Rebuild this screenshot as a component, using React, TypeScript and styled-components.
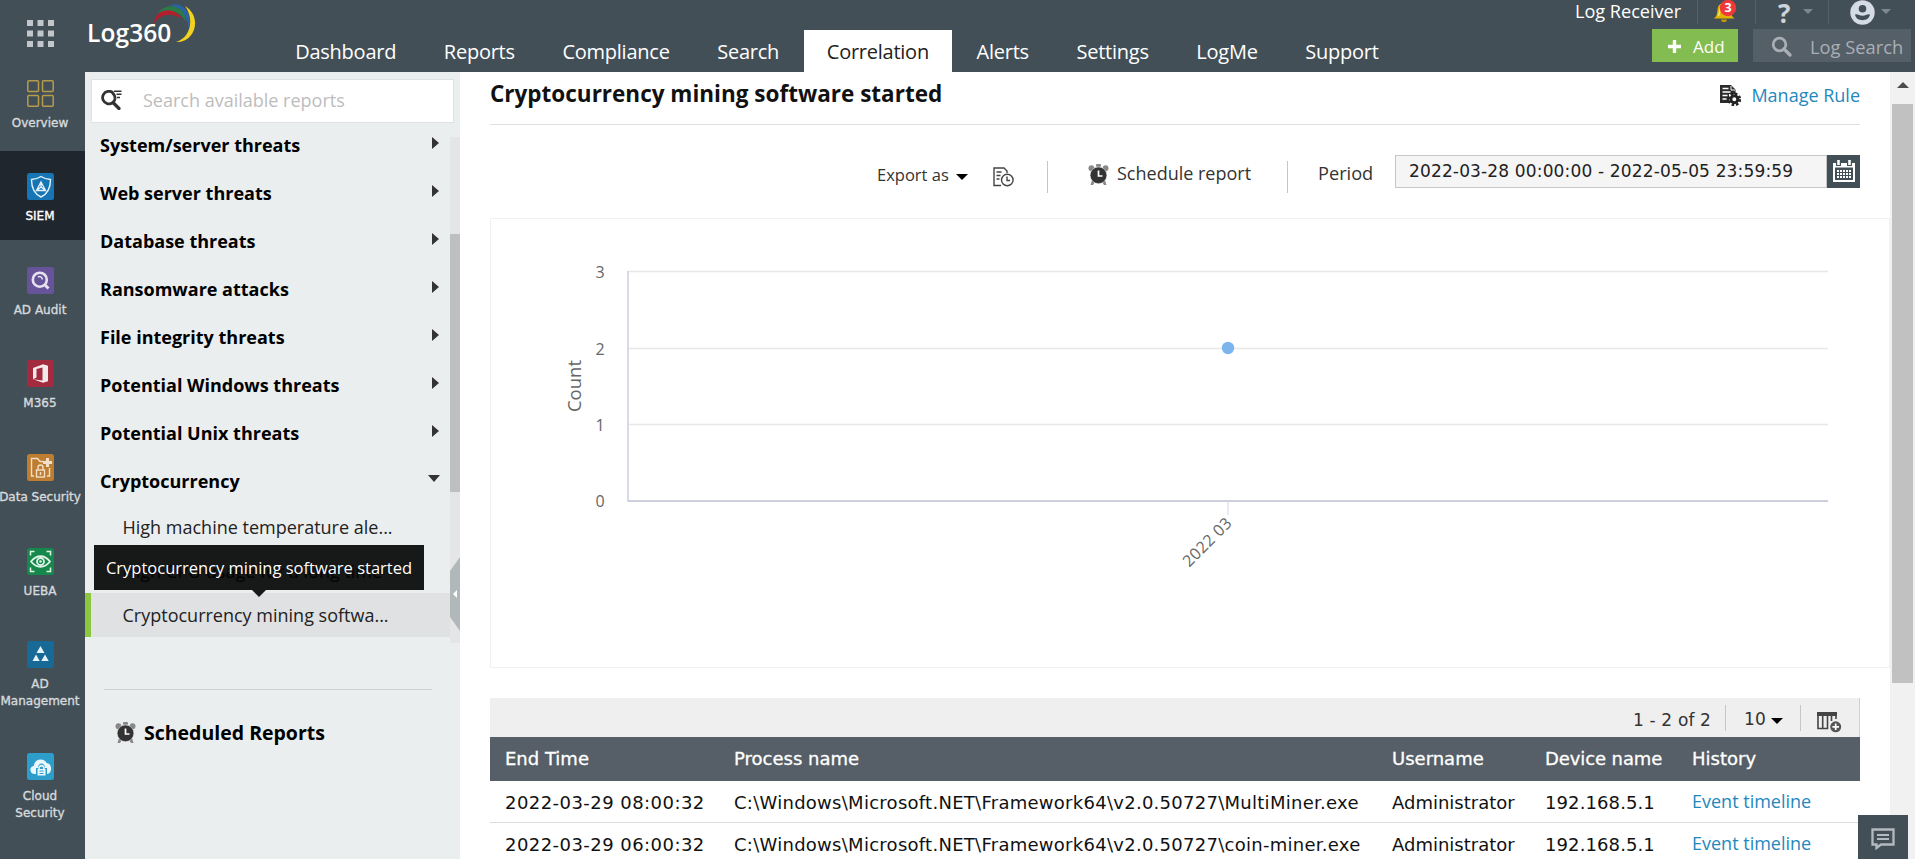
import React from "react";
import styled, { createGlobalStyle } from "styled-components";

const GlobalStyle = createGlobalStyle`
  * {
    box-sizing: border-box;
  }
  body {
    margin: 0;
    font-family: "Open Sans", sans-serif;
    color: #1d1d1d;
    background: #fff;
    overflow: hidden;
  }
`;

const Page = styled.div`
  display: flex;
  flex-direction: column;
  width: 1915px;
  height: 859px;
  overflow: hidden;
`;

/* ---------- header ---------- */

const Header = styled.header`
  display: flex;
  height: 72px;
  flex: none;
  background: #434f57;
  color: #fff;
`;

const AppsButton = styled.div`
  width: 85px;
  padding: 20px 0 0 27px;
`;

const Brand = styled.div`
  position: relative;
  width: 187px;
  padding: 16px 0 0 2px;
  font-size: 24.5px;
  font-weight: 600;
  line-height: 34px;
  letter-spacing: 0.1px;
`;

const BrandArc = styled.svg`
  position: absolute;
  left: 64px;
  top: 2px;
`;

const Nav = styled.nav`
  display: flex;
  align-items: flex-end;
  gap: 1.3px;
  flex: 1;
`;

const NavItem = styled.a<{ $active?: boolean }>`
  height: 42px;
  padding: 0 23.2px;
  font-size: 20px;
  line-height: 43px;
  letter-spacing: -0.25px;
  color: ${({ $active }) => ($active ? "#222" : "#fff")};
  background: ${({ $active }) => ($active ? "#fff" : "transparent")};
`;

const HeaderTools = styled.div`
  width: 340px;
  display: flex;
  flex-direction: column;
`;

const UserRow = styled.div`
  display: flex;
  height: 24px;
  font-size: 18.1px;
  line-height: 22px;
`;

const Receiver = styled.span`
  width: 122px;
`;

const ToolCell = styled.div<{ $width: number; $pad: number }>`
  display: flex;
  width: ${({ $width }) => $width}px;
  padding-left: ${({ $pad }) => $pad}px;
  border-left: 1px solid #56626a;
`;

const Help = styled.span`
  width: 22px;
  height: 24px;
  font-size: 26px;
  font-weight: 700;
  line-height: 26px;
  color: #cdd3d9;
`;

const SmallCaret = styled.i<{ $left?: number }>`
  width: 0;
  height: 0;
  margin: 9px 0 0 ${({ $left = 3 }) => $left}px;
  border: 5px solid transparent;
  border-top-color: #7d8890;
  border-bottom: 0;
`;

const ActionRow = styled.div`
  display: flex;
  padding: 5px 0 0 77px;
`;

const AddButton = styled.button`
  display: flex;
  align-items: center;
  gap: 12px;
  width: 86px;
  height: 33px;
  margin-right: 15px;
  padding: 2px 0 0 16px;
  border: 0;
  background: #83bc50;
  color: #fff;
  font: 17px "Open Sans", sans-serif;
`;

const LogSearch = styled.div`
  display: flex;
  align-items: center;
  gap: 18px;
  width: 158px;
  height: 33px;
  padding: 2px 0 0 18px;
  background: #555f68;
  color: #a9afb5;
  font-size: 18.3px;
  white-space: nowrap;
`;

/* ---------- product rail ---------- */

const Body = styled.div`
  display: flex;
  flex: 1;
  min-height: 0;
`;

const Rail = styled.aside`
  width: 85px;
  background: #434f57;
`;

const RailItem = styled.div<{ $active?: boolean; $height: number; $top: number }>`
  display: flex;
  flex-direction: column;
  align-items: center;
  height: ${({ $height }) => $height}px;
  padding: ${({ $top }) => $top}px 5px 0 0;
  background: ${({ $active }) => ($active ? "#20262d" : "transparent")};
  color: ${({ $active }) => ($active ? "#fff" : "#d6dadd")};
  font: 12px/17px "DejaVu Sans", sans-serif;
  -webkit-text-stroke: 0.35px;
  text-align: center;
  white-space: pre;

  svg {
    flex: none;
    margin: 0 0 8px 1px;
  }
`;

/* ---------- report tree ---------- */

const Sidebar = styled.aside`
  display: flex;
  flex-direction: column;
  width: 375px;
  background: #ebeeef;
`;

const ReportSearch = styled.div`
  display: flex;
  align-items: center;
  gap: 21px;
  width: 363px;
  height: 44px;
  margin: 7px 0 0 6px;
  padding: 0 0 3px 9px;
  border: 1px solid #dfe2e4;
  background: #fff;
  color: #bdbdbd;
  font-size: 18px;
`;

const TreeArea = styled.div`
  display: flex;
  position: relative;
  height: 506px;
  margin-top: 14px;
`;

const Tree = styled.div`
  width: 365px;
  margin-top: -16px;
`;

const Group = styled.div`
  display: flex;
  justify-content: space-between;
  height: 48px;
  padding: 0 10px 0 15px;
  font-size: 18px;
  font-weight: 700;
  line-height: 48px;
  color: #000;
`;

const GroupArrow = styled.i<{ $open?: boolean }>`
  width: 0;
  height: 0;
  margin: ${({ $open }) => ($open ? "18px 0 0" : "16px 1px 0 0")};
  border-style: solid;
  border-color: ${({ $open }) =>
    $open
      ? "#333 transparent transparent"
      : "transparent transparent transparent #333"};
  border-width: ${({ $open }) => ($open ? "7px 6px 0" : "6px 0 6px 7px")};
`;

const Leaf = styled.div<{ $selected?: boolean }>`
  height: 44px;
  padding-left: ${({ $selected }) => ($selected ? 31.5 : 37.5)}px;
  border-left: ${({ $selected }) => ($selected ? "6px solid #8dc63f" : "0")};
  background: ${({ $selected }) => ($selected ? "#dfe1e2" : "transparent")};
  font-size: 18px;
  line-height: 44px;
  color: #222;
`;

const TreeScroll = styled.div`
  width: 10px;
  padding-top: 97px;
  background: #e3e5e6;
`;

const TreeThumb = styled.div`
  height: 258px;
  background: #bdbfc0;
`;

const CollapseHandle = styled.div`
  position: absolute;
  right: 0;
  top: 420px;
  display: flex;
  align-items: center;
  justify-content: center;
  width: 10px;
  height: 74px;
  background: #b0b8ba;
  clip-path: polygon(0 14px, 100% 0, 100% 100%, 0 60px);
`;

const HandleArrow = styled.i`
  border: 4px solid transparent;
  border-right-color: #fff;
  border-left: 0;
`;

const Tooltip = styled.div`
  position: absolute;
  left: 9px;
  top: 408px;
  width: 330px;
  height: 45px;
  background: rgba(0, 0, 0, 0.9);
  color: #fff;
  font-size: 16.5px;
  line-height: 45px;
  text-align: center;
  white-space: nowrap;

  &::after {
    content: "";
    position: absolute;
    left: 158px;
    top: 45px;
    border: 7px solid transparent;
    border-top-color: #181818;
    border-bottom: 0;
  }
`;

const Scheduled = styled.div`
  display: flex;
  align-items: center;
  gap: 8px;
  width: 328px;
  margin: 46px 0 0 19px;
  padding: 29px 0 0 11px;
  border-top: 1px solid #cfd1d3;
  color: #000;
  font-size: 19.5px;
  font-weight: 700;
`;

/* ---------- report ---------- */

const Main = styled.main`
  display: flex;
  flex-direction: column;
  width: 1430px;
  padding-left: 30px;
`;

const TitleRow = styled.div`
  display: flex;
  justify-content: space-between;
  width: 1370px;
  height: 53px;
  flex: none;
  border-bottom: 1px solid #dfdfdf;
`;

const Title = styled.h1`
  margin: 0;
  color: #111;
  font-size: 22.5px;
  font-weight: 700;
  line-height: 43px;
`;

const ManageRule = styled.a`
  display: flex;
  align-items: center;
  gap: 10px;
  height: 46px;
  color: #2488bd;
  font-size: 18px;
`;

const ReportTools = styled.div`
  display: flex;
  width: 1370px;
  height: 63px;
  flex: none;
  margin-top: 30px;
  padding-left: 387px;
  color: #333;
`;

const ToolLabel = styled.span<{ $width: number; $size?: number; $line?: number }>`
  width: ${({ $width }) => $width}px;
  font-size: ${({ $size = 18 }) => $size}px;
  line-height: ${({ $line = 36 }) => $line}px;
  white-space: nowrap;
`;

const Caret = styled.i<{ $top: number }>`
  width: 0;
  height: 0;
  margin-top: ${({ $top }) => $top}px;
  border: 6px solid transparent;
  border-top-color: #000;
  border-bottom: 0;
`;

const IconSlot = styled.span<{ $left: number; $top: number; $right?: number }>`
  display: block;
  line-height: 0;
  margin: ${({ $left, $top, $right = 0 }) => `${$top}px ${$right}px 0 ${$left}px`};
`;

const Divider = styled.i<{ $height: number; $top: number; $right: number; $left?: number }>`
  width: 1px;
  height: ${({ $height }) => $height}px;
  margin: ${({ $top, $right, $left = 0 }) => `${$top}px ${$right}px 0 ${$left}px`};
  background: #c6c6c6;
`;

const DateField = styled.div`
  width: 432px;
  height: 33px;
  padding-left: 13px;
  border: 1px solid #c6c6c6;
  background: #f5f5f5;
  color: #222;
  font: 17px/31px "DejaVu Sans", sans-serif;
  letter-spacing: 0.15px;
  white-space: nowrap;
`;

const CalendarButton = styled.div`
  display: flex;
  align-items: center;
  justify-content: center;
  width: 33px;
  height: 33px;
  padding-bottom: 2px;
  background: #434f57;
`;

const ChartCard = styled.section`
  width: 1400px;
  height: 450px;
  flex: none;
  border: 1px solid #f1f1f1;

  text {
    font-family: "Open Sans", sans-serif;
    fill: #666;
  }
`;

const TableTools = styled.div`
  display: flex;
  justify-content: flex-end;
  width: 1370px;
  height: 39px;
  flex: none;
  margin-top: 30px;
  border-right: 1px solid #d0d0d0;
  background: #efefef;
  color: #333;
  font-family: "DejaVu Sans", sans-serif;
  letter-spacing: 0.15px;
`;

const TableRow = styled.div<{ $head?: boolean }>`
  display: grid;
  grid-template-columns: 229px 658px 153px 147px 1fr;
  width: 1370px;
  height: ${({ $head }) => ($head ? 44 : 42)}px;
  flex: none;
  padding-left: 15px;
  border-bottom: ${({ $head }) => ($head ? "0" : "1px solid #ddd")};
  background: ${({ $head }) => ($head ? "#565f67" : "#fff")};
  color: ${({ $head }) => ($head ? "#fff" : "#111")};
  font: 18px / 43px "DejaVu Sans", sans-serif;
  -webkit-text-stroke: ${({ $head }) => ($head ? "0.3px" : "0")};
  white-space: nowrap;
`;

const Cell = styled.span<{ $spacing?: number }>`
  letter-spacing: ${({ $spacing = 0 }) => $spacing}px;
`;

const TimelineLink = styled.a`
  color: #2488bd;
  font: 18px/40px "Open Sans", sans-serif;
`;

const PageScroll = styled.div`
  width: 25px;
  padding: 10px 2px 0;
  background: #f1f1f1;
`;

const ScrollUp = styled.i`
  display: block;
  width: 0;
  margin: 0 auto 16px;
  border: 6px solid transparent;
  border-top: 0;
  border-bottom-color: #4d4d4d;
`;

const PageThumb = styled.div`
  height: 579px;
  background: #c1c1c1;
`;

const ChatButton = styled.div`
  position: absolute;
  left: 1858px;
  top: 815px;
  display: flex;
  justify-content: center;
  width: 50px;
  height: 44px;
  padding-top: 13px;
  background: #434f57;
`;

/* ---------- icons ---------- */

const AppsIcon = () => (
  <svg width="27" height="27" viewBox="0 0 27 27" fill="#c2c7cc">
    {[0, 10.5, 21].map((y) =>
      [0, 10.5, 21].map((x) => <rect key={`${x}-${y}`} x={x} y={y} width="6" height="6" />),
    )}
  </svg>
);

const AlarmIcon = () => (
  <svg width="21" height="21" viewBox="0 0 21 21">
    <g fill="#888">
      <circle cx="3.4" cy="4.2" r="2.9" />
      <circle cx="17.6" cy="4.2" r="2.9" />
      <rect x="8" y="0" width="5" height="3" rx="1" />
      <path d="M4 16l3 2-2 3H2.5zM17 16l-3 2 2 3h2.5z" />
    </g>
    <circle cx="10.5" cy="11.3" r="8.4" fill="#333" stroke="#ebeeef" strokeWidth="0.6" />
    <path d="M10.5 6.5v5.500h4" fill="none" stroke="#fff" strokeWidth="1.7" />
  </svg>
);

const SearchIcon = ({ color }: { color: string }) => (
  <svg width="21" height="21" viewBox="0 0 21 21" fill="none" stroke={color}>
    <circle cx="8.5" cy="8.5" r="6.3" strokeWidth="2.8" />
    <path d="M13 13l6 6" strokeWidth="3.2" strokeLinecap="round" />
  </svg>
);

const ReportSearchIcon = () => (
  <svg width="21" height="20" viewBox="0 0 21 20" fill="none" stroke="#333">
    <path d="M12 2.800A6.300 6.300 0 1 0 14.200 8M11 2.300c2 1.500 3 3.500 3.200 6.500" strokeWidth="2.800" />
    <path d="M12.500 13l5.500 5.500" strokeWidth="3.200" strokeLinecap="round" />
    <path d="M13 1.200h7.500M15.500 4.300h5M16 7.500h3" strokeWidth="1.400" />
  </svg>
);

const BellIcon = () => (
  <svg width="26" height="24" viewBox="0 0 26 24">
    <path d="M0 18.500c3-2.500 3-4.500 3.500-8.500.4-5 3-7 6.500-7s6 2 6.500 7c.5 4 1 6 4 8.500z" fill="#e0b400" />
    <path d="M4.500 16c1.500-5 1-9 4-11" stroke="#f8e26a" strokeWidth="1.500" fill="none" />
    <path d="M7 19.500h6l-1 2.500H8z" fill="#c29a06" />
    <circle cx="14" cy="8" r="8.200" fill="#f0383b" />
    <text x="14" y="12.300" textAnchor="middle" fill="#fff" fontSize="12.500" fontWeight="700">
      3
    </text>
  </svg>
);

const UserIcon = () => (
  <svg width="25" height="25" viewBox="0 0 25 25">
    <circle cx="12.500" cy="12.500" r="12.200" fill="#d5dbe4" />
    <circle cx="12.500" cy="8.800" r="3.800" fill="#434f57" />
    <path d="M5 14.800c2-1.500 4 1 7.500 1s5.500-2.500 7.500-1c-1 3.800-4 5.400-7.500 5.400s-6.500-1.600-7.500-5.400z" fill="#434f57" />
  </svg>
);

const ManageIcon = () => (
  <svg width="21" height="21" viewBox="0 0 21 21">
    <path d="M0 0h11l4.500 4.500V9H9v9H0z" fill="#2b2b2b" />
    <path d="M2.500 3.500h6M2.500 7h8M2.500 10.500h5M2.500 14h4" stroke="#fff" strokeWidth="1.500" />
    <path d="M11 1v4h4" stroke="#fff" fill="none" />
    <circle cx="14.300" cy="14.300" r="5.700" fill="none" stroke="#222" strokeWidth="2.400" strokeDasharray="2.500 1.970" />
    <circle cx="14.300" cy="14.300" r="3.500" fill="#fff" stroke="#222" strokeWidth="3" />
  </svg>
);

const ExportHistoryIcon = () => (
  <svg width="21" height="20" viewBox="0 0 21 20" fill="none" stroke="#444" strokeWidth="1.400">
    <path d="M14 6V4l-3-3H1v17.500h7" />
    <path d="M3.500 5h5M3.500 8.500h4M3.500 12h3" />
    <circle cx="14.300" cy="13" r="5.800" />
    <path d="M14 9.500v4h3" />
  </svg>
);

const CalendarIcon = () => (
  <svg width="22" height="22" viewBox="0 0 22 22">
    <path d="M1 4h20v17H1z" fill="none" stroke="#fff" strokeWidth="2" />
    <path d="M1 3h20v4.500H1z" fill="#fff" />
    <path d="M5.500 0v6M16.500 0v6" stroke="#434f57" strokeWidth="5" />
    <path d="M5.500 0v5M16.500 0v5" stroke="#fff" strokeWidth="2.600" />
    <path d="M4 11h14M4 14h14M4 17h14" stroke="#fff" strokeWidth="1.900" strokeDasharray="2 1" />
  </svg>
);

const ColumnsIcon = () => (
  <svg width="25" height="21" viewBox="0 0 25 21">
    <path d="M1 1v15.500h9.500V4M5.700 4v12.500M14.500 4v5M19 4v3" fill="none" stroke="#444" strokeWidth="1.600" />
    <path d="M0 0h20v4H0z" fill="#444" />
    <circle cx="18.700" cy="14.800" r="5.500" fill="#555" />
    <path d="M18.700 11.500v6.600M15.400 14.800H22" stroke="#fff" strokeWidth="1.700" />
  </svg>
);

const ChatIcon = () => (
  <svg width="24" height="22" viewBox="0 0 24 22" fill="none" stroke="#b4babf">
    <path d="M1.500 1.500h21v15H10L5.500 20v-3.500h-4z" strokeWidth="2.300" />
    <path d="M6 7h12M6 11h12" strokeWidth="2" />
  </svg>
);

type IconKind = "overview" | "siem" | "audit" | "m365" | "data" | "ueba" | "admin" | "cloud";

const railColors: Record<IconKind, string> = {
  overview: "none",
  siem: "#1675b5",
  audit: "#66539a",
  m365: "#a32b40",
  data: "#bf7d31",
  ueba: "#16884b",
  admin: "#176a96",
  cloud: "#2d9dcc",
};

const railGlyphs: Record<IconKind, React.ReactNode> = {
  overview: (
    <g stroke="#b79b4c" strokeWidth="1.500">
      <rect x="0.800" y="0.800" width="10.700" height="10.700" rx="1" />
      <rect x="15.500" y="0.800" width="10.700" height="10.700" rx="1" />
      <rect x="0.800" y="15.500" width="10.700" height="10.700" rx="1" />
      <rect x="15.500" y="15.500" width="10.700" height="10.700" rx="1" />
    </g>
  ),
  siem: (
    <g stroke="#e4f1f9" strokeWidth="1.400">
      <path d="M14 3.500c3 2 6 2.700 9.500 3 0 8-2 14-9.500 17.500-7.500-3.500-9.500-9.500-9.500-17.500 3.500-.3 6.500-1 9.500-3z" />
      <path d="M14 9l4.500 8.500h-9zM14 9v5l4.500 3.500M14 14l-4.500 3.500" />
    </g>
  ),
  audit: (
    <g stroke="#e7e1ef">
      <circle cx="12.800" cy="12.700" r="7" strokeWidth="2.600" />
      <path d="M17.500 17.500l4 4" strokeWidth="3" />
      <path d="M11 10c2-1.300 4 0 4.500 2.500" strokeWidth="1.500" />
    </g>
  ),
  m365: (
    <path d="M6 8l10-3.800 5 1.500v15.500l-5 1.600L6 19.300l9.500 1.200V7.500L9.500 9v8.500L6 19.300z" fill="#f3e8ea" />
  ),
  data: (
    <g stroke="#f1dfc8" strokeWidth="1.400">
      <path d="M7 22H4.500V4.500h6L13 7.500h3M20 22h2.500v-8" />
      <rect x="9.500" y="16" width="8" height="7" />
      <path d="M11 16v-2.500a2.500 2.500 0 0 1 5 0V16M13.500 18v3" />
      <path d="M20.500 4v9M16 8.500h9" strokeWidth="3" />
    </g>
  ),
  ueba: (
    <g stroke="#e1f2e8" strokeWidth="1.500">
      <path d="M3.500 7.500v-4h4M19.500 3.500h4v4M23.500 19.500v4h-4M7.500 23.500h-4v-4" />
      <path d="M4 13.500c5.500-7 13.500-7 19 0-5.500 7-13.500 7-19 0z" strokeWidth="1.800" />
      <circle cx="13.500" cy="13.500" r="3.500" strokeWidth="1.800" />
      <circle cx="13.500" cy="13.500" r="1.300" fill="#e1f2e8" stroke="none" />
    </g>
  ),
  admin: (
    <path d="M13.500 5l4 7h-8zM9 13.500l3.700 6.500H5.500zM18 13.500l3.700 6.500h-7.400z" fill="#e6f2f7" />
  ),
  cloud: (
    <g>
      <path d="M8 21c-6 0-6-8-1-8 0-8 11-8 12.500-3C25 10 26 20 20 21z" fill="#eaf7fc" />
      <path d="M9 23v-8h2c0-6 7-6 7 0h2v8z" fill="#2d9dcc" />
      <rect x="10.500" y="16" width="8" height="6.500" fill="#eaf7fc" />
      <path d="M12 16c-.3-4.500 5.300-4.500 5 0" stroke="#eaf7fc" strokeWidth="1.600" />
      <path d="M12.500 18h4M12.500 20.500h4" stroke="#2d9dcc" />
    </g>
  ),
};

const RailIcon = ({ kind }: { kind: IconKind }) => (
  <svg width="27" height="27" viewBox="0 0 27 27" fill="none">
    <rect width="27" height="27" rx="2.500" fill={railColors[kind]} />
    {railGlyphs[kind]}
  </svg>
);

/* ---------- data ---------- */

const navItems = [
  "Dashboard",
  "Reports",
  "Compliance",
  "Search",
  "Correlation",
  "Alerts",
  "Settings",
  "LogMe",
  "Support",
];

const railItems: { kind: IconKind; label: string; height: number; top: number }[] = [
  { kind: "overview", label: "Overview", height: 79, top: 8 },
  { kind: "siem", label: "SIEM", height: 89, top: 22 },
  { kind: "audit", label: "AD Audit", height: 94, top: 27 },
  { kind: "m365", label: "M365", height: 93, top: 26 },
  { kind: "data", label: "Data Security", height: 94, top: 27 },
  { kind: "ueba", label: "UEBA", height: 93, top: 27 },
  { kind: "admin", label: "AD\nManagement", height: 112, top: 27 },
  { kind: "cloud", label: "Cloud\nSecurity", height: 112, top: 27 },
];

const groups = [
  "System/server threats",
  "Web server threats",
  "Database threats",
  "Ransomware attacks",
  "File integrity threats",
  "Potential Windows threats",
  "Potential Unix threats",
];

const rows = [
  {
    time: "2022-03-29 08:00:32",
    process: "C:\\Windows\\Microsoft.NET\\Framework64\\v2.0.50727\\MultiMiner.exe",
  },
  {
    time: "2022-03-29 06:00:32",
    process: "C:\\Windows\\Microsoft.NET\\Framework64\\v2.0.50727\\coin-miner.exe",
  },
];

// y position of every value on the count axis
const ticks = [
  { value: 3, y: 53 },
  { value: 2, y: 130 },
  { value: 1, y: 206 },
  { value: 0, y: 282 },
];

const CountChart = () => (
  <svg width="1398" height="446" viewBox="0 0 1398 446">
    {ticks.map(({ value, y }) => (
      <g key={value}>
        {value > 0 && <path d={`M137 ${y - 0.5}H1337`} stroke="#e8e8e8" strokeWidth="1.500" />}
        <text x="109" y={y + 5.5} textAnchor="middle" fontSize="16">
          {value}
        </text>
      </g>
    ))}
    <path d="M137 52v230" stroke="#ccd0e0" strokeWidth="1.500" />
    <path d="M136.500 282H1337" stroke="#cdd0dc" strokeWidth="2" />
    <path d="M737 282v14" stroke="#ccd6eb" />
    <circle cx="737" cy="129" r="6.200" fill="#7cb5ec" />
    <text transform="translate(90 167) rotate(-90)" textAnchor="middle" fontSize="18.500">
      Count
    </text>
    <text transform="translate(742 305) rotate(-45)" textAnchor="end" fontSize="16" letterSpacing="0.4">
      2022 03
    </text>
  </svg>
);

export default function App() {
  return (
    <Page>
      <GlobalStyle />
      <Header>
        <AppsButton>
          <AppsIcon />
        </AppsButton>
        <Brand>
          Log360
          <BrandArc width="50" height="42" viewBox="0 0 50 42" fill="none">
            <path d="M21 3.500c11-5 24 6 19 26-.5-11-5-22-19-26z" fill="#2a62a3" />
            <path d="M9 11c8-11 27-9 28 9-6-11-16-13-28-9z" fill="#2c7a46" />
            <path d="M5 22C6 7 24 3 33 17c-9-6-21-7-28 5z" fill="#b3202c" />
            <path d="M36 4c18 11 10 37-9 36 14-4 19-22 9-36z" fill="#f2d21f" />
          </BrandArc>
        </Brand>
        <Nav>
          {navItems.map((item) => (
            <NavItem key={item} $active={item === "Correlation"}>
              {item}
            </NavItem>
          ))}
        </Nav>
        <HeaderTools>
          <UserRow>
            <Receiver>Log Receiver</Receiver>
            <ToolCell $width={58} $pad={16}>
              <BellIcon />
            </ToolCell>
            <ToolCell $width={73} $pad={22}>
              <Help>?</Help>
              <SmallCaret />
            </ToolCell>
            <ToolCell $width={87} $pad={21}>
              <UserIcon />
              <SmallCaret $left={6} />
            </ToolCell>
          </UserRow>
          <ActionRow>
            <AddButton>
              <svg width="13" height="13" viewBox="0 0 13 13">
                <path d="M6.500 0v13M0 6.500h13" stroke="#fff" strokeWidth="3.400" />
              </svg>
              Add
            </AddButton>
            <LogSearch>
              <SearchIcon color="#a9afb5" />
              Log Search
            </LogSearch>
          </ActionRow>
        </HeaderTools>
      </Header>

      <Body>
        <Rail>
          {railItems.map(({ kind, label, height, top }) => (
            <RailItem key={kind} $active={kind === "siem"} $height={height} $top={top}>
              <RailIcon kind={kind} />
              {label}
            </RailItem>
          ))}
        </Rail>

        <Sidebar>
          <ReportSearch>
            <ReportSearchIcon />
            Search available reports
          </ReportSearch>
          <TreeArea>
            <Tree>
              {groups.map((group) => (
                <Group key={group}>
                  {group}
                  <GroupArrow />
                </Group>
              ))}
              <Group>
                Cryptocurrency
                <GroupArrow $open />
              </Group>
              <Leaf>High machine temperature ale...</Leaf>
              <Leaf>High CPU usage for a long time</Leaf>
              <Leaf $selected>Cryptocurrency mining softwa...</Leaf>
            </Tree>
            <TreeScroll>
              <TreeThumb />
            </TreeScroll>
            <CollapseHandle>
              <HandleArrow />
            </CollapseHandle>
            <Tooltip>Cryptocurrency mining software started</Tooltip>
          </TreeArea>
          <Scheduled>
            <AlarmIcon />
            Scheduled Reports
          </Scheduled>
        </Sidebar>

        <Main>
          <TitleRow>
            <Title>Cryptocurrency mining software started</Title>
            <ManageRule>
              <ManageIcon />
              Manage Rule
            </ManageRule>
          </TitleRow>
          <ReportTools>
            <ToolLabel $width={79} $size={16.5} $line={40}>
              Export as
            </ToolLabel>
            <Caret $top={19} />
            <IconSlot $left={25} $top={12} $right={33}>
              <ExportHistoryIcon />
            </IconSlot>
            <Divider $height={32} $top={6} $right={40} />
            <IconSlot $left={0} $top={9} $right={8}>
              <AlarmIcon />
            </IconSlot>
            <ToolLabel $width={170}>Schedule report</ToolLabel>
            <Divider $height={32} $top={6} $right={30} />
            <ToolLabel $width={77} $size={18.2}>
              Period
            </ToolLabel>
            <DateField>2022-03-28 00:00:00 - 2022-05-05 23:59:59</DateField>
            <CalendarButton>
              <CalendarIcon />
            </CalendarButton>
          </ReportTools>
          <ChartCard>
            <CountChart />
          </ChartCard>
          <TableTools>
            <ToolLabel $width={92} $size={17} $line={44}>
              1 - 2 of 2
            </ToolLabel>
            <Divider $height={26} $top={7} $right={18} />
            <ToolLabel $width={27} $size={17} $line={43}>
              10
            </ToolLabel>
            <Caret $top={20} />
            <Divider $height={26} $top={7} $left={17} $right={16} />
            <IconSlot $left={0} $top={14} $right={17}>
              <ColumnsIcon />
            </IconSlot>
          </TableTools>
          <TableRow $head>
            <Cell>End Time</Cell>
            <Cell>Process name</Cell>
            <Cell>Username</Cell>
            <Cell $spacing={-0.1}>Device name</Cell>
            <Cell>History</Cell>
          </TableRow>
          {rows.map(({ time, process }) => (
            <TableRow key={time}>
              <Cell $spacing={0.45}>{time}</Cell>
              <Cell $spacing={0.27}>{process}</Cell>
              <Cell>Administrator</Cell>
              <Cell $spacing={0.1}>192.168.5.1</Cell>
              <TimelineLink>Event timeline</TimelineLink>
            </TableRow>
          ))}
        </Main>
        <PageScroll>
          <ScrollUp />
          <PageThumb />
        </PageScroll>
      </Body>
      <ChatButton>
        <ChatIcon />
      </ChatButton>
    </Page>
  );
}
